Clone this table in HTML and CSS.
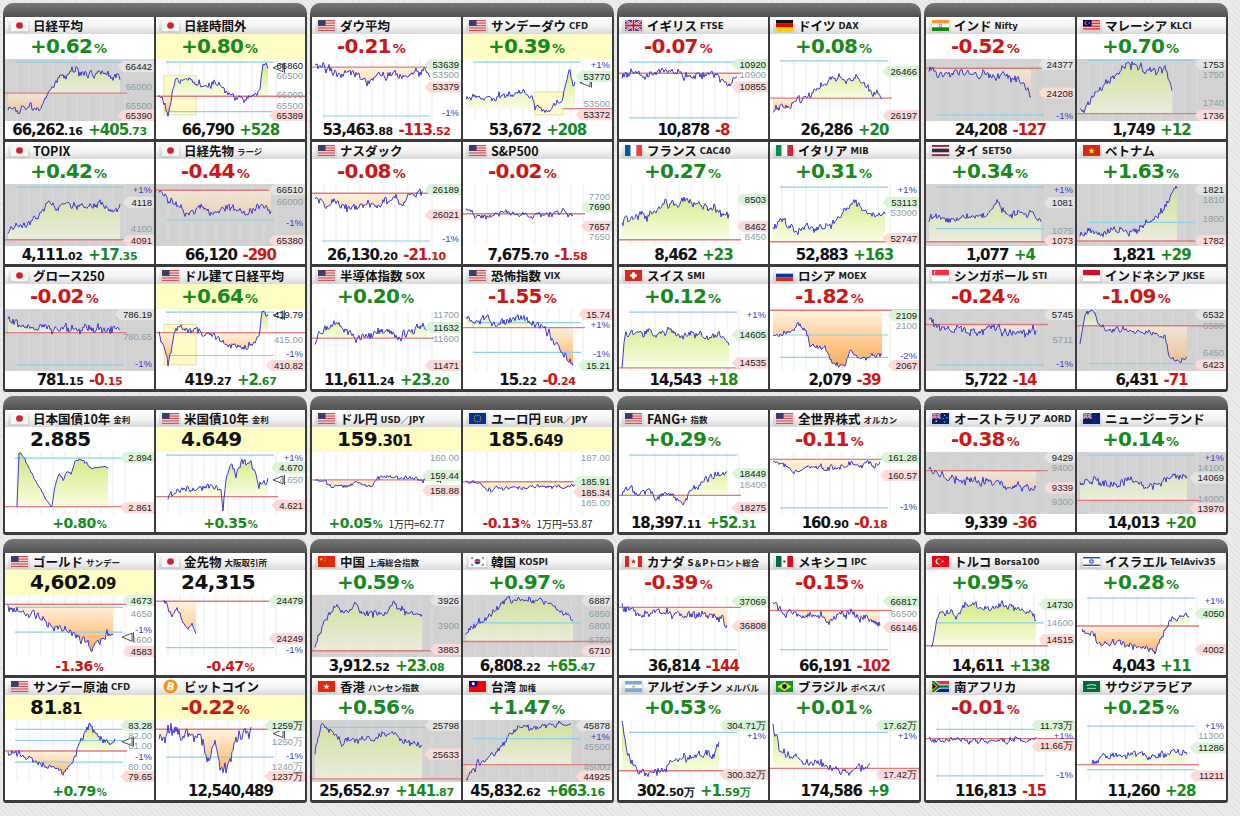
FILE: index.html
```html
<!DOCTYPE html>
<html lang="ja">
<head>
<meta charset="utf-8">
<title>世界の株価</title>
<link rel="stylesheet" href="styles.css">
</head>
<body>
<div id="app" class="page"></div>
<script src="script.js"></script>
</body>
</html>
```

FILE: styles.css
```css
body{margin:0;background:#e8e8e8 repeating-linear-gradient(45deg,#e1e1e1 0 1px,#ebebeb 1px 4px);font-family:"Noto Sans CJK JP",sans-serif;}
.page{padding:3px 0 0 3px;display:flex;flex-direction:column;gap:4px;}
.section{display:grid;grid-template-columns:repeat(4,304px);column-gap:3px;}
.group{background:linear-gradient(#777,#505050 14px,#3b3b3b 14px);border-radius:10px 10px 3px 3px;padding:14px 2px 3px;display:grid;grid-template-columns:149px 149px;gap:3px 2px;}
.card{background:#fff;height:122px;display:flex;flex-direction:column;overflow:hidden;}
.title{height:17px;flex:none;display:flex;align-items:center;background:linear-gradient(#fff,#f3f3f3 55%,#d8d8d8);white-space:nowrap;overflow:hidden;}
.fl{width:22px;height:14px;margin:0 3px;flex:none;display:flex;align-items:center;justify-content:center;background:linear-gradient(#f7f7f7,#cdcdcd);border-radius:2px;}
.fl svg{width:17px;height:11px;display:block;}
.fl.btc{background:none;}
.fl.btc svg{width:15px;height:15px;}
.tt{font-size:12.5px;font-weight:700;color:#111;line-height:17px;}
.st{font-size:8.5px;font-weight:700;margin-left:3px;font-family:"DejaVu Sans","Noto Sans CJK JP",sans-serif;color:#222;}
.top{height:25px;flex:none;padding-left:25px;line-height:25px;white-space:nowrap;}
.top.hl{background:#fdfdc4;}
.pct{font-family:"DejaVu Sans",sans-serif;font-weight:700;font-size:20px;letter-spacing:-0.8px;}
.pct small{font-size:13px;letter-spacing:0;margin-left:2px;}
.pbig{font-family:"DejaVu Sans",sans-serif;font-weight:700;font-size:20px;letter-spacing:-0.5px;color:#111;}
.pbig small{font-size:15px;}
.chart{height:62px;flex:none;}
.chart svg{display:block;}
.chart text{font-family:"Liberation Sans",sans-serif;font-size:9.5px;}
.bot{height:18px;flex:none;text-align:center;line-height:18px;font-family:"DejaVu Sans",sans-serif;font-weight:700;white-space:nowrap;}
.pr{font-size:15px;letter-spacing:-1px;color:#111;}
.chg{font-size:15px;letter-spacing:-1px;}
.pr small,.chg small{font-size:11px;letter-spacing:-0.3px;}
.pct2{font-size:14px;letter-spacing:-0.6px;}
.pct2 small{font-size:10px;letter-spacing:0;margin-left:1px;}
.note{font-family:"Noto Sans CJK JP",sans-serif;font-weight:400;font-size:10px;color:#222;letter-spacing:0;}
.up{color:#178a1d;}
.dn{color:#c91818;}
```

FILE: script.js
```js
const H=62,W=149;
const S1=[[
{f:'jp',t:'日経平均',pct:'+0.62',p:'66,262|.16',c:'+405|.73',gray:1,ref:.55,blue:[.05],end:115,pts:[.78,.8,.75,.8,.72,.5,.3,.25,.2,.25,.28,.22,.3,.28],L:[['66442',.12,'g'],['66000',.45,'a'],['65500',.82,'a'],['65390',.93,'l']]},
{f:'jp',t:'日経時間外',hl:1,pct:'+0.80',p:'66,790',c:'+528',ref:.6,refX:149,blue:[.05,.85],box:[8,40,.27,.9],xy:[[3,.55],[8,.7],[12,.9],[16,.6],[20,.3],[30,.35],[45,.42],[60,.4],[70,.55],[78,.65],[90,.62],[100,.55],[104,.5],[107,.1],[112,.18]],n:.05,arrow:.14,L:[['66860',.1,'k'],['66500',.27,'a'],['66000',.58,'a'],['65500',.8,'a'],['65389',.95,'l']]},
{f:'us',t:'ダウ平均',pct:'-0.21',p:'53,463|.88',c:'-113|.52',ref:.13,blue:[.92],end:118,pts:[.12,.08,.2,.25,.22,.28,.32,.35,.3,.28,.25,.3,.22,.18,.25],L:[['53639',.05,'h'],['53500',.22,'a'],['53379',.45,'l'],['-1%',.87,'b']]},
{f:'us',t:'サンデーダウ',s:'CFD',hl:1,pct:'+0.39',p:'53,672',c:'+208',ref:.8,refX0:100,refX:149,blue:[.05],box:[72,100,.53,.9],xy:[[3,.62],[30,.6],[60,.58],[68,.55],[72,.75],[85,.8],[98,.7],[102,.5],[106,.2],[110,.38],[112,.35]],n:.05,arrow:.38,L:[['+1%',.05,'b'],['53770',.28,'h'],['53500',.72,'a'],['53372',.9,'l']]},
{f:'gb',t:'イギリス',s:'FTSE',pct:'-0.07',p:'10,878',c:'-8',ref:.23,blue:[.05,.95],end:118,pts:[.3,.2,.25,.3,.2,.15,.25,.3,.28,.22,.3,.35,.3],L:[['10920',.05,'h'],['10900',.2,'a'],['10855',.45,'l']]},
{f:'de',t:'ドイツ',s:'DAX',pct:'+0.08',p:'26,286',c:'+20',ref:.63,blue:[.03],end:112,pts:[.85,.8,.78,.7,.62,.55,.45,.35,.28,.3,.35,.3,.4,.55,.65],L:[['26466',.2,'h'],['26197',.93,'l']]},
{f:'in',t:'インド',s:'Nifty',pct:'-0.52',p:'24,208',c:'-127',gray:1,ref:.15,blue:[.9],end:105,pts:[.15,.2,.25,.2,.25,.3,.25,.3,.28,.32,.35,.62],L:[['24377',.05,'g'],['24208',.55,'l'],['-1%',.92,'b']]},
{f:'my',t:'マレーシア',s:'KLCI',pct:'+0.70',p:'1,749',c:'+12',gray:1,ref:.88,blue:[.02],end:95,pts:[.85,.8,.6,.5,.35,.25,.15,.12,.1,.15,.2,.15,.2,.5],L:[['1753',.05,'g'],['1750',.2,'a'],['1740',.7,'a'],['1736',.92,'l']]}
],[
{f:'jp',t:'TOPIX',pct:'+0.42',p:'4,111|.02',c:'+17|.35',gray:1,ref:.9,blue:[.05],end:115,pts:[.75,.7,.65,.55,.45,.35,.3,.35,.4,.35,.3,.35,.4,.38],L:[['+1%',.05,'b'],['4118',.3,'g'],['4100',.72,'a'],['4091',.93,'l']]},
{f:'jp',t:'日経先物',s:'ラージ',pct:'-0.44',p:'66,120',c:'-290',gray:1,ref:.1,blue:[.58],end:115,pts:[.15,.25,.35,.45,.4,.35,.45,.4,.35,.4,.45,.4,.35,.4],L:[['66510',.05,'g'],['66000',.28,'a'],['-1%',.62,'b'],['65380',.92,'l']]},
{f:'us',t:'ナスダック',pct:'-0.08',p:'26,130|.20',c:'-21|.10',ref:.15,blue:[.92],end:110,pts:[.2,.35,.3,.35,.4,.35,.3,.38,.3,.25,.3,.2,.18],L:[['26189',.05,'h'],['26021',.5,'l'],['-1%',.88,'b']]},
{f:'us',t:'S&amp;P500',pct:'-0.02',p:'7,675|.70',c:'-1|.58',ref:.48,blue:[],end:110,pts:[.42,.5,.55,.5,.45,.52,.48,.52,.5,.48,.45,.5],n:.04,L:[['7700',.2,'a'],['7690',.37,'h'],['7657',.68,'l'],['7650',.85,'a']]},
{f:'fr',t:'フランス',s:'CAC40',pct:'+0.27',p:'8,462',c:'+23',ref:.9,blue:[],end:110,pts:[.6,.55,.5,.52,.42,.35,.3,.25,.3,.35,.4,.45,.5],L:[['8503',.25,'h'],['8462',.68,'l'],['8450',.85,'a']]},
{f:'it',t:'イタリア',s:'MIB',pct:'+0.31',p:'52,883',c:'+163',ref:.93,blue:[.05],end:115,pts:[.7,.65,.75,.7,.72,.68,.62,.42,.3,.45,.55,.5],L:[['+1%',.03,'b'],['53113',.3,'h'],['53000',.45,'a'],['52747',.88,'l']]},
{f:'th',t:'タイ',s:'SET50',pct:'+0.34',p:'1,077',c:'+4',gray:1,ref:.93,blue:[.05,.72],end:115,pts:[.55,.5,.6,.55,.5,.55,.3,.5,.45,.5,.55],n:.05,L:[['+1%',.03,'b'],['1081',.3,'g'],['1075',.75,'a'],['1073',.95,'l']]},
{f:'vn',t:'ベトナム',pct:'+1.63',p:'1,821',c:'+29',gray:1,ref:.92,blue:[.62],end:100,pts:[.8,.75,.8,.75,.7,.75,.7,.6,.5,.3,.08],L:[['1821',.05,'g'],['1810',.25,'a'],['1800',.55,'a'],['1782',.93,'l']]}
],[
{f:'jp',t:'グロース250',pct:'-0.02',p:'781|.15',c:'-0|.15',gray:1,ref:.38,blue:[.9],end:115,pts:[.15,.25,.3,.28,.35,.3,.32,.36,.3,.33,.35],L:[['786.19',.05,'g'],['780.65',.45,'a'],['-1%',.88,'b']]},
{f:'us',t:'ドル建て日経平均',hl:1,pct:'+0.64',p:'419|.27',c:'+2|.67',ref:.38,refX:149,blue:[.05,.75],box:[8,40,.25,.9],xy:[[3,.4],[8,.6],[12,.9],[16,.55],[20,.28],[35,.35],[50,.4],[62,.45],[72,.6],[85,.62],[98,.55],[103,.45],[106,.05],[112,.1]],n:.05,arrow:.1,L:[['419.79',.05,'k'],['415.00',.5,'a'],['-1%',.72,'b'],['410.82',.92,'l']]},
{f:'us',t:'半導体指数',s:'SOX',pct:'+0.20',p:'11,611|.24',c:'+23|.20',ref:.47,blue:[],end:115,pts:[.5,.3,.25,.35,.45,.5,.4,.35,.45,.4,.3,.35],L:[['11700',.05,'a'],['11632',.3,'h'],['11600',.47,'a'],['11471',.92,'l']]},
{f:'us',t:'恐怖指数',s:'VIX',pct:'-1.55',p:'15|.22',c:'-0|.24',ref:.3,blue:[.22,.7],end:110,pts:[.15,.2,.12,.25,.2,.15,.2,.25,.3,.5,.72,.92],L:[['15.74',.05,'l'],['+1%',.22,'b'],['-1%',.72,'b'],['15.21',.92,'h']]},
{f:'ch',t:'スイス',s:'SMI',pct:'+0.12',p:'14,543',c:'+18',ref:.95,blue:[.05],xy:[[3,.92],[6,.4],[20,.35],[35,.4],[50,.35],[65,.45],[80,.42],[90,.5],[98,.4],[104,.45],[110,.6]],n:.05,L:[['+1%',.05,'b'],['14605',.42,'h'],['14535',.87,'l']]},
{f:'ru',t:'ロシア',s:'MOEX',pct:'-1.82',p:'2,079',c:'-39',ref:.02,refX:149,blue:[.42,.78],xy:[[3,.45],[10,.4],[20,.35],[28,.25],[35,.3],[40,.6],[55,.6],[62,.9],[75,.9],[80,.7],[90,.78],[112,.75]],n:.04,L:[['2109',.1,'h'],['2100',.25,'a'],['-2%',.78,'b'],['2067',.95,'l']]},
{f:'sg',t:'シンガポール',s:'STI',pct:'-0.24',p:'5,722',c:'-14',gray:1,ref:.25,blue:[.9],end:110,pts:[.2,.3,.35,.3,.4,.35,.3,.4,.35,.4,.38],L:[['5745',.05,'g'],['5711',.5,'a'],['-1%',.88,'b']]},
{f:'id',t:'インドネシア',s:'JKSE',pct:'-1.09',p:'6,431',c:'-71',gray:1,ref:.27,refX:149,blue:[.88],xy:[[3,.55],[8,.1],[15,.05],[25,.3],[50,.35],[80,.4],[88,.45],[92,.75],[100,.85],[110,.8]],n:.04,L:[['6532',.05,'g'],['6500',.27,'a'],['6450',.7,'a'],['6423',.9,'l']]}
]];
const S2=[[
{f:'jp',t:'日本国債10年',s:'金利',B:1,top:'2.885',bp:'+0.80',ref:.88,refX:149,blue:[.1],xy:[[12,.88],[14,.02],[16,.02],[45,.88],[47,.88],[50,.55],[54,.35],[58,.45],[62,.3],[66,.35],[70,.15],[74,.1],[78,.15],[82,.2],[86,.25],[95,.25],[103,.25]],n:.02,L:[['2.894',.05,'h'],['2.861',.9,'l']]},
{f:'us',t:'米国債10年',s:'金利',B:1,hl:1,top:'4.649',bp:'+0.35',ref:.72,blue:[.05],xy:[[12,.72],[20,.62],[40,.6],[55,.55],[65,.62],[67,.92],[70,.4],[75,.2],[80,.35],[85,.15],[95,.2],[100,.3],[103,.55],[108,.5],[112,.48]],n:.05,arrow:.45,L:[['+1%',.02,'b'],['4.670',.2,'h'],['4.650',.45,'a'],['4.621',.86,'l']]},
{f:'us',t:'ドル円',s:'USD／JPY',B:1,hl:1,top:'159|.301',bp:'+0.05',note:'1万円=62.77',ref:.45,refX:125,blue:[],end:115,pts:[.45,.45,.55,.52,.55,.5,.52,.55,.42,.38,.4,.42,.4,.44,.45],n:.03,arrow:.42,L:[['160.00',.08,'a'],['159.44',.38,'h'],['158.88',.62,'l']]},
{f:'eu',t:'ユーロ円',s:'EUR／JPY',B:1,hl:1,top:'185|.649',bp:'-0.13',note:'1万円=53.87',ref:.48,refX:125,blue:[],end:115,pts:[.48,.48,.55,.62,.6,.58,.6,.58,.55,.55,.56,.6,.55,.52],n:.03,arrow:.5,L:[['187.00',.08,'a'],['185.91',.48,'h'],['185.34',.65,'l'],['185.00',.82,'a']]},
{f:'us',t:'FANG+',s:'指数',pct:'+0.29',p:'18,397|.11',c:'+52|.31',ref:.7,blue:[.05],end:108,pts:[.65,.55,.7,.6,.75,.65,.7,.85,.6,.5,.4,.3,.35],L:[['18449',.35,'h'],['18400',.52,'a'],['18275',.9,'l']]},
{f:'us',t:'全世界株式',s:'オルカン',pct:'-0.11',p:'160|.90',c:'-0|.18',ref:.12,blue:[.9],end:110,pts:[.15,.2,.3,.25,.22,.28,.25,.2,.25,.22,.2],n:.04,L:[['161.28',.06,'h'],['160.57',.38,'l'],['-1%',.88,'b']]},
{f:'au',t:'オーストラリア',s:'AORD',pct:'-0.38',p:'9,339',c:'-36',gray:1,ref:.3,blue:[],end:110,pts:[.3,.35,.4,.45,.42,.48,.45,.5,.55,.5,.58,.6],L:[['9429',.08,'g'],['9400',.25,'a'],['9339',.58,'l'],['9300',.8,'a']]},
{f:'nz',t:'ニュージーランド',pct:'+0.14',p:'14,013',c:'+20',gray:1,ref:.78,blue:[.05],end:110,pts:[.55,.45,.5,.55,.5,.45,.5,.55,.5,.45,.42,.4],L:[['+1%',.05,'b'],['14100',.18,'a'],['14069',.38,'g'],['14000',.75,'a'],['13970',.92,'l']]}
]];
const S3=[[
{f:'us',t:'ゴールド',s:'サンデー',B:1,hl:1,top:'4,602|.09',bp:'-1.36',ref:.15,blue:[.2,.6],xy:[[3,.2],[15,.25],[30,.35],[45,.45],[60,.55],[75,.7],[88,.85],[95,.75],[102,.6],[108,.65]],n:.06,arrow:.68,L:[['4673',.03,'h'],['4650',.3,'a'],['-1%',.55,'b'],['4600',.72,'a'],['4583',.92,'l']]},
{f:'jp',t:'金先物',s:'大阪取引所',B:1,top:'24,315',bp:'-0.47',ref:.1,refX:149,blue:[.85],x0:8,end:40,pts:[.1,.25,.3,.2,.35,.5,.6,.45,.65],n:.05,L:[['24479',.03,'h'],['24249',.7,'l'],['-1%',.88,'b']]},
{f:'cn',t:'中国',s:'上海総合指数',pct:'+0.59',p:'3,912|.52',c:'+23|.08',gray:1,ref:.9,refX:149,blue:[],end:110,pts:[.8,.4,.15,.25,.2,.3,.25,.3,.2,.25,.3,.35],L:[['3926',.08,'g'],['3900',.5,'a'],['3883',.88,'l']]},
{f:'kr',t:'韓国',s:'KOSPI',pct:'+0.97',p:'6,808|.22',c:'+65|.47',gray:1,ref:.75,refX:149,blue:[.45],xy:[[3,.6],[15,.45],[30,.3],[45,.05],[80,.08],[95,.25],[110,.4]],n:.05,L:[['6887',.05,'g'],['6850',.3,'a'],['6800',.5,'a'],['6750',.72,'a'],['6710',.9,'l']]},
{f:'ca',t:'カナダ',s:'S＆Pトロント総合',pct:'-0.39',p:'36,814',c:'-144',ref:.2,blue:[.88],end:108,pts:[.2,.25,.3,.28,.25,.3,.35,.28,.3,.32,.35,.5],L:[['37069',.1,'h'],['36808',.5,'l']]},
{f:'mx',t:'メキシコ',s:'IPC',pct:'-0.15',p:'66,191',c:'-102',ref:.25,blue:[.88],end:110,pts:[.15,.25,.3,.35,.3,.4,.35,.3,.35,.4,.45],L:[['66817',.1,'h'],['66500',.3,'a'],['66146',.52,'l']]},
{f:'tr',t:'トルコ',s:'Borsa100',pct:'+0.95',p:'14,611',c:'+138',ref:.82,blue:[.45],xy:[[5,.8],[8,.7],[12,.35],[18,.3],[30,.35],[40,.15],[60,.2],[80,.18],[95,.25],[105,.3],[110,.4]],n:.05,L:[['14730',.15,'h'],['14600',.45,'a'],['14515',.72,'l']]},
{f:'il',t:'イスラエル',s:'TelAviv35',pct:'+0.28',p:'4,043',c:'+11',ref:.5,blue:[.05],xy:[[5,.55],[15,.65],[25,.8],[45,.75],[60,.85],[80,.88],[88,.6],[95,.35],[105,.4],[112,.38]],n:.05,L:[['+1%',.05,'b'],['4050',.3,'h'],['4002',.88,'l']]}
],[
{f:'us',t:'サンデー原油',s:'CFD',B:1,hl:1,top:'81|.81',bp:'+0.79',ref:.5,blue:[.15,.33,.68],xy:[[3,.5],[15,.55],[30,.7],[45,.75],[55,.85],[65,.75],[72,.5],[78,.3],[85,.05],[92,.25],[100,.35],[110,.35]],n:.05,arrow:.35,L:[['83.28',.05,'h'],['82.00',.3,'a'],['81.00',.5,'a'],['-1%',.65,'b'],['80.00',.78,'a'],['79.65',.9,'l']]},
{f:'btc',t:'ビットコイン',hl:1,pct:'-0.22',p:'12,540,489',c:'',ref:.15,refX:149,blue:[.6],end:95,pts:[.2,.3,.15,.25,.3,.2,.25,.4,.6,.3,.7,.8,.5,.35,.3,.2],n:.1,arrow:.22,L:[['1259万',.05,'h'],['1250万',.35,'a'],['-1%',.58,'b'],['1240万',.78,'a'],['1237万',.92,'l']]},
{f:'hk',t:'香港',s:'ハンセン指数',pct:'+0.56',p:'25,652|.97',c:'+141|.87',gray:1,ref:.95,refX:149,blue:[.12],xy:[[3,.5],[10,.05],[20,.2],[30,.35],[40,.35],[50,.3],[60,.3],[70,.22],[80,.25],[95,.35],[110,.45]],n:.05,L:[['25798',.05,'g'],['25633',.55,'l']]},
{f:'tw',t:'台湾',s:'加権',pct:'+1.47',p:'45,832|.62',c:'+663|.16',gray:1,ref:.72,refX:149,blue:[.3],xy:[[3,.92],[15,.7],[30,.55],[40,.4],[50,.2],[60,.15],[80,.1],[95,.05],[108,.07]],n:.05,L:[['45878',.05,'g'],['+1%',.26,'b'],['45500',.42,'a'],['45000',.78,'a'],['44925',.93,'l']]},
{f:'ar',t:'アルゼンチン',s:'メルバル',pct:'+0.53',p:'302|.50万',c:'+1|.59万',ref:.82,refX:149,blue:[.2],xy:[[3,.05],[8,.5],[15,.75],[25,.85],[40,.8],[55,.7],[70,.6],[85,.55],[95,.55],[100,.35]],n:.06,L:[['304.71万',.03,'h'],['+1%',.2,'b'],['300.32万',.88,'l']]},
{f:'br',t:'ブラジル',s:'ボベスパ',pct:'+0.01',p:'174,586',c:'+9',ref:.78,refX:149,blue:[.2],xy:[[3,.1],[10,.5],[20,.6],[35,.65],[50,.7],[65,.8],[80,.85],[90,.75],[100,.72]],n:.06,L:[['17.62万',.03,'h'],['+1%',.2,'b'],['17.42万',.88,'l']]},
{f:'za',t:'南アフリカ',pct:'-0.01',p:'116,813',c:'-15',ref:.3,refX:149,blue:[.15,.9],end:110,pts:[.32,.35,.3,.32,.35,.3,.33,.35,.3,.32,.3],n:.04,L:[['11.73万',.03,'h'],['+1%',.18,'b'],['11.66万',.38,'l'],['-1%',.88,'b']]},
{f:'sa',t:'サウジアラビア',pct:'+0.25',p:'11,260',c:'+28',ref:.72,blue:[.1,.8],x0:15,end:110,pts:[.7,.6,.55,.6,.58,.55,.6,.58,.55,.52,.55],n:.05,L:[['+1%',.08,'b'],['11300',.25,'a'],['11286',.45,'h'],['11211',.9,'l']]}
]];

function rng(seed){return function(){seed|=0;seed=seed+0x6D2B79F5|0;let t=Math.imul(seed^seed>>>15,1|seed);t=t+Math.imul(t^t>>>7,61|t)^t;return((t^t>>>14)>>>0)/4294967296;};}
const R=(x,y,w,h,f)=>`<rect x="${x}" y="${y}" width="${w}" height="${h}" fill="${f}"/>`;
const C=(x,y,r,f)=>`<circle cx="${x}" cy="${y}" r="${r}" fill="${f}"/>`;
function star(cx,cy,r,fill,rot){rot=rot||0;const p=[];for(let k=0;k<10;k++){const a=-Math.PI/2+rot+k*Math.PI/5;const rr=k%2?r*0.42:r;p.push((cx+rr*Math.cos(a)).toFixed(2)+','+(cy+rr*Math.sin(a)).toFixed(2));}return `<polygon points="${p.join(' ')}" fill="${fill}"/>`;}
const UK='<rect width="18" height="12" fill="#1f3a8a"/><path d="M0,0L18,12M18,0L0,12" stroke="#fff" stroke-width="2.4"/><path d="M0,0L18,12M18,0L0,12" stroke="#c8102e" stroke-width=".9"/><path d="M9,0V12M0,6H18" stroke="#fff" stroke-width="3.6"/><path d="M9,0V12M0,6H18" stroke="#c8102e" stroke-width="2"/>';
function usFlag(){let s=R(0,0,18,12,'#fff');for(let k=0;k<7;k++)s+=R(0,(k*24/13).toFixed(2),18,(12/13).toFixed(2),'#c4343a');return s+R(0,0,8,(84/13).toFixed(2),'#3c3b6e');}
function myFlag(){let s=R(0,0,18,12,'#fff');for(let k=0;k<7;k++)s+=R(0,(k*24/14).toFixed(2),18,(12/14).toFixed(2),'#cc0001');return s+R(0,0,9,6.9,'#010066')+C(3.6,3.4,2,'#fc0')+C(4.3,3.4,1.7,'#010066')+star(6.7,3.4,1.2,'#fc0');}
function euFlag(){let s=R(0,0,18,12,'#003399');for(let k=0;k<12;k++){const a=k*Math.PI/6;s+=C((9+3.6*Math.cos(a)).toFixed(2),(6+3.6*Math.sin(a)).toFixed(2),.55,'#ffcc00');}return s;}
const FL={
jp:()=>R(0,0,18,12,'#f7f7f7')+C(9,6,3.6,'#d2232a'),
us:usFlag,
gb:()=>UK,
de:()=>R(0,0,18,4,'#111')+R(0,4,18,4,'#dd0000')+R(0,8,18,4,'#ffce00'),
in:()=>R(0,0,18,4,'#ff9933')+R(0,4,18,4,'#fff')+R(0,8,18,4,'#138808')+'<circle cx="9" cy="6" r="1.5" fill="none" stroke="#000080" stroke-width=".5"/>',
my:myFlag,
fr:()=>R(0,0,6,12,'#0055a4')+R(6,0,6,12,'#fff')+R(12,0,6,12,'#ef4135'),
it:()=>R(0,0,6,12,'#009246')+R(6,0,6,12,'#fff')+R(12,0,6,12,'#ce2b37'),
th:()=>R(0,0,18,12,'#a51931')+R(0,2,18,8,'#f4f5f8')+R(0,4,18,4,'#2d2a4a'),
vn:()=>R(0,0,18,12,'#da251d')+star(9,6.3,3.6,'#ffff00'),
ch:()=>R(0,0,18,12,'#d52b1e')+R(7.6,2.5,2.8,7,'#fff')+R(5.5,4.6,7,2.8,'#fff'),
ru:()=>R(0,0,18,4,'#fff')+R(0,4,18,4,'#0039a6')+R(0,8,18,4,'#d52b1e'),
sg:()=>R(0,0,18,6,'#ef3340')+R(0,6,18,6,'#fff')+C(4,3,2,'#fff')+C(4.8,3,1.8,'#ef3340'),
id:()=>R(0,0,18,6,'#ce1126')+R(0,6,18,6,'#fff'),
eu:euFlag,
au:()=>R(0,0,18,12,'#012169')+'<g transform="scale(.5)">'+UK+'</g>'+star(4.5,9,1.3,'#fff')+star(13.5,2.5,.9,'#fff')+star(11.8,6,.9,'#fff')+star(15.6,5.2,.9,'#fff')+star(13.5,9.8,1,'#fff'),
nz:()=>R(0,0,18,12,'#012169')+'<g transform="scale(.5)">'+UK+'</g>'+star(13.5,2.8,1,'#c8102e')+star(11.8,6,1,'#c8102e')+star(15.6,5.2,.9,'#c8102e')+star(13.5,9.6,1.1,'#c8102e'),
cn:()=>R(0,0,18,12,'#de2910')+star(3.5,3.5,2,'#ffde00')+star(6.5,1.4,.7,'#ffde00')+star(7.9,2.9,.7,'#ffde00')+star(7.9,4.9,.7,'#ffde00')+star(6.5,6.4,.7,'#ffde00'),
kr:()=>R(0,0,18,12,'#fff')+'<path d="M6,6a3,3 0 0 1 6,0z" fill="#cd2e3a"/><path d="M6,6a3,3 0 0 0 6,0z" fill="#0047a0"/><path d="M2,2.5l2,-1.3M2.5,3.3l2,-1.3M14,1.2l2,1.3M13.5,2l2,1.3M2,9.5l2,1.3M2.5,8.7l2,1.3M14,10.8l2,-1.3M13.5,10l2,-1.3" stroke="#000" stroke-width=".6"/>',
ca:()=>R(0,0,18,12,'#fff')+R(0,0,4.5,12,'#d52b1e')+R(13.5,0,4.5,12,'#d52b1e')+star(9,6,3,'#d52b1e'),
mx:()=>R(0,0,6,12,'#006847')+R(6,0,6,12,'#fff')+R(12,0,6,12,'#ce1126')+C(9,6,1.4,'#8c5a2b'),
tr:()=>R(0,0,18,12,'#e30a17')+C(7,6,3.2,'#fff')+C(7.9,6,2.6,'#e30a17')+star(11.4,6,1.5,'#fff',.3),
il:()=>R(0,0,18,12,'#fff')+R(0,1.2,18,1.4,'#0038b8')+R(0,9.4,18,1.4,'#0038b8')+'<polygon points="9,3.2 11.4,7.4 6.6,7.4" fill="none" stroke="#0038b8" stroke-width=".6"/><polygon points="9,8.8 11.4,4.6 6.6,4.6" fill="none" stroke="#0038b8" stroke-width=".6"/>',
hk:()=>R(0,0,18,12,'#de2910')+star(9,6.3,3.5,'#fff'),
tw:()=>R(0,0,18,12,'#fe0000')+R(0,0,9,6,'#000095')+C(4.5,3,1.6,'#fff'),
ar:()=>R(0,0,18,4,'#74acdf')+R(0,4,18,4,'#fff')+R(0,8,18,4,'#74acdf')+C(9,6,1.3,'#f6b40e'),
br:()=>R(0,0,18,12,'#009b3a')+'<polygon points="9,1.2 16.5,6 9,10.8 1.5,6" fill="#fedf00"/>'+C(9,6,2.6,'#002776'),
za:()=>R(0,0,18,6,'#de3831')+R(0,6,18,6,'#002395')+'<path d="M0,0L7.5,6L0,12" fill="none" stroke="#fff" stroke-width="4.5"/><path d="M6,6H18" stroke="#fff" stroke-width="4.5"/><path d="M0,0L7.5,6L0,12" fill="none" stroke="#007a4d" stroke-width="2.7"/><path d="M7.5,6H18" stroke="#007a4d" stroke-width="2.7"/><path d="M0,1.8L5.2,6L0,10.2Z" fill="#000" stroke="#ffb612" stroke-width="1"/>',
sa:()=>R(0,0,18,12,'#006c35')+'<path d="M4,4.8Q9,3 14,4.8" stroke="#fff" stroke-width=".9" fill="none"/><path d="M4.5,8H13.5" stroke="#fff" stroke-width=".8"/>'
};
function flagBox(f){
 if(f==='btc')return '<span class="fl btc"><svg viewBox="0 0 15 15"><circle cx="7.5" cy="7.5" r="7" fill="#f7931a"/><text x="7.6" y="11.2" text-anchor="middle" font-size="10.5" font-weight="700" fill="#fff" font-family="DejaVu Sans" transform="rotate(12 7.5 7.5)">B</text></svg></span>';
 return `<span class="fl"><svg viewBox="0 0 18 12" preserveAspectRatio="none">${FL[f]()}</svg></span>`;
}
function buildLine(d,rnd){
 const x0=d.x0!=null?d.x0:3,x1=d.end||115;
 const kp=d.xy?d.xy:d.pts.map((y,i)=>[x0+(x1-x0)*i/(d.pts.length-1),y]);
 const n=d.n!=null?d.n:.06;
 const out=[];let w=0;
 const xs=kp[0][0],xe=kp[kp.length-1][0];
 for(let x=xs;x<=xe+0.001;x+=1){
  let j=0;while(j<kp.length-2&&x>kp[j+1][0])j++;
  const [xa,ya]=kp[j],[xb,yb]=kp[j+1];
  const t=xb===xa?1:Math.min(1,Math.max(0,(x-xa)/(xb-xa)));
  const base=ya+(yb-ya)*t;
  w=0.6*w+(rnd()-0.5)*n*1.5;
  const jit=(rnd()-0.5)*n*1.4;
  let y=(base+w+jit)*H;
  y=Math.max(1,Math.min(H-1,y));
  out.push([x,y]);
 }
 return out;
}
function tw(t){let w=0;for(const ch of t){w+=/[\u3000-\u9fff]/.test(ch)?9.5:(ch==='.'?2.6:5.3);}return w;}
function chart(d,i){
 const rnd=rng(i*977+31);
 const ry=(d.ref*H).toFixed(1);
 let s=`<svg viewBox="0 0 ${W} ${H}" width="${W}" height="${H}">`;
 s+=`<defs><linearGradient id="gu${i}" gradientUnits="userSpaceOnUse" x1="0" y1="${ry}" x2="0" y2="0"><stop offset="0" stop-color="#fafde4"/><stop offset="1" stop-color="#cde772"/></linearGradient><linearGradient id="gd${i}" gradientUnits="userSpaceOnUse" x1="0" y1="${ry}" x2="0" y2="${H}"><stop offset="0" stop-color="#fff3df"/><stop offset="1" stop-color="#ffa448"/></linearGradient><clipPath id="cu${i}"><rect width="${W}" height="${ry}"/></clipPath><clipPath id="cd${i}"><rect y="${ry}" width="${W}" height="${(H-ry).toFixed(1)}"/></clipPath></defs>`;
 if(d.gray)s+=R(0,0,W,H,'#d2d2d2');
 for(let x=12;x<=120;x+=12)s+=`<line x1="${x}" y1="0" x2="${x}" y2="${H}" stroke="${d.gray?'#dadada':'#ebebeb'}" stroke-width="1"/>`;
 if(d.box){const [a,b,c,e]=d.box;s+=`<rect x="${a}" y="${(c*H).toFixed(1)}" width="${b-a}" height="${((e-c)*H).toFixed(1)}" fill="#fffbc8" stroke="#e6d890" stroke-width=".8"/>`;}
 const pts=buildLine(d,rnd);
 const ps=pts.map(p=>p[0].toFixed(1)+','+p[1].toFixed(1)).join(' ');
 const area=ps+` ${pts[pts.length-1][0]},${ry} ${pts[0][0]},${ry}`;
 const op=d.gray?' fill-opacity=".6"':'';
 s+=`<polygon points="${area}" fill="url(#gu${i})" clip-path="url(#cu${i})"${op}/><polygon points="${area}" fill="url(#gd${i})" clip-path="url(#cd${i})"${op}/>`;
 (d.blue||[]).forEach(b=>{const y=(b*H).toFixed(1);s+=`<line x1="10" x2="118" y1="${y}" y2="${y}" stroke="#8dcfe6" stroke-width="1.2"/>`;});
 s+=`<line x1="${d.refX0||0}" x2="${d.refX||122}" y1="${ry}" y2="${ry}" stroke="#e57a7a" stroke-width="1.4"/>`;
 s+=`<polyline points="${ps}" fill="none" stroke="#3b3bd4" stroke-width="1" stroke-linejoin="round"/>`;
 if(d.arrow!=null){const y=d.arrow*H;s+=`<polygon points="117,${y.toFixed(1)} 127,${(y-4).toFixed(1)} 127,${(y+4).toFixed(1)}" fill="#fff" stroke="#222" stroke-width=".8"/><line x1="128.5" x2="128.5" y1="${(y-5).toFixed(1)}" y2="${(y+5).toFixed(1)}" stroke="#222" stroke-width=".8"/>`;}
 const labs=(d.L||[]).map(([t,yf,k])=>({t,k,y:yf*H})).sort((a,b)=>a.y-b.y);
 const G=10.2,lo=5.5,hi=H-5.5;
 for(let j=0;j<labs.length;j++)labs[j].y=Math.max(labs[j].y,j?labs[j-1].y+G:lo);
 for(let j=labs.length-1;j>=0;j--)labs[j].y=Math.min(labs[j].y,j<labs.length-1?labs[j+1].y-G:hi);
 labs.forEach(({t,k,y})=>{
  if(k==='h'||k==='l'||k==='g'){
   const x0=147-tw(t)-3;
   const fill=k==='h'?'#d9f4d9':(k==='l'?'#fbdada':'#e3e3e3');
   s+=`<polygon points="${(x0-5).toFixed(1)},${y.toFixed(1)} ${x0.toFixed(1)},${(y-5.5).toFixed(1)} ${W},${(y-5.5).toFixed(1)} ${W},${(y+5.5).toFixed(1)} ${x0.toFixed(1)},${(y+5.5).toFixed(1)}" fill="${fill}"/>`;
   s+=`<text x="147" y="${(y+3.4).toFixed(1)}" text-anchor="end" fill="#1a1a1a">${t}</text>`;
  }else{
   const col=k==='a'?'#8a9ea6':(k==='b'?'#3344c4':'#111');
   s+=`<text x="147" y="${(y+3.4).toFixed(1)}" text-anchor="end" fill="${col}">${t}</text>`;
  }
 });
 return s+'</svg>';
}
function sp(v){const a=v.split('|');return a[1]!=null?`${a[0]}<small>${a[1]}</small>`:a[0];}
function card(d,i){
 const up=d.B?d.bp[0]!=='-':d.pct[0]!=='-';
 let h=`<div class="card"><div class="title">${flagBox(d.f)}<span class="tt">${d.t}</span>${d.s?`<span class="st">${d.s}</span>`:''}</div>`;
 if(!d.B)h+=`<div class="top${d.hl?' hl':''}"><span class="pct ${up?'up':'dn'}">${d.pct}<small>%</small></span></div>`;
 else h+=`<div class="top${d.hl?' hl':''}"><span class="pbig">${sp(d.top)}</span></div>`;
 h+=`<div class="chart">${chart(d,i)}</div>`;
 if(!d.B){
  let c='';
  if(d.c){c=` <span class="chg ${d.c[0]!=='-'?'up':'dn'}">${sp(d.c)}</span>`;}
  h+=`<div class="bot"><span class="pr">${sp(d.p)}</span>${c}</div>`;
 }else{
  h+=`<div class="bot"><span class="pct2 ${up?'up':'dn'}">${d.bp}<small>%</small></span>${d.note?` <span class="note">${d.note}</span>`:''}</div>`;
 }
 return h+'</div>';
}
let idx=0,html='';
[S1,S2,S3].forEach(sec=>{
 html+='<div class="section">';
 for(let g=0;g<4;g++){
  html+='<div class="group">';
  sec.forEach(row=>{for(let k=0;k<2;k++){html+=card(row[g*2+k],idx++);}});
  html+='</div>';
 }
 html+='</div>';
});
document.getElementById('app').innerHTML=html;
```
